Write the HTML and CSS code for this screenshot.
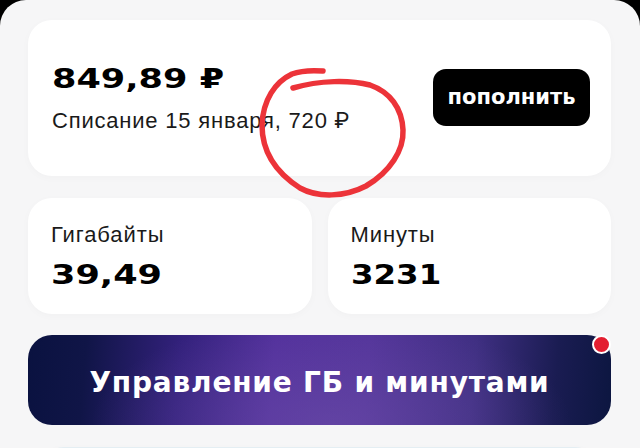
FILE: index.html
```html
<!DOCTYPE html>
<html lang="ru">
<head>
<meta charset="utf-8">
<title>Баланс</title>
<link rel="stylesheet" href="styles.css">
</head>
<body>
<div class="screen">
  <section class="card balance">
    <div class="balance-info">
      <div class="amount"><span class="wide">849,89 ₽</span></div>
      <div class="charge">Списание 15 января, 720 ₽</div>
    </div>
    <button class="topup">пополнить</button>
  </section>

  <div class="stats">
    <section class="card stat">
      <div class="stat-label">Гигабайты</div>
      <div class="stat-value"><span class="wide">39,49</span></div>
    </section>
    <section class="card stat">
      <div class="stat-label">Минуты</div>
      <div class="stat-value"><span class="wide narrow">3231</span></div>
    </section>
  </div>

  <a class="manage">
    <span class="manage-text">Управление ГБ и минутами</span>
    <span class="dot"></span>
  </a>

  <section class="card next"></section>

  <svg class="scribble" width="640" height="448" viewBox="0 0 640 448" aria-hidden="true">
    <path d="M323,71 C310,70 300,71 292,74 C275,82 263,100 262,125 C262,150 275,172 300,188 C318,198 345,197 366,186 C390,172 404,150 403,130 C402,108 390,92 370,85 C350,80 320,80 293,88" fill="none" stroke="#ec3339" stroke-width="5.5" stroke-linecap="round" stroke-linejoin="round"/>
  </svg>
</div>
</body>
</html>
```

FILE: styles.css
```css
html, body {
  margin: 0;
  padding: 0;
  background: #000;
}

body {
  width: 640px;
  height: 448px;
  overflow: hidden;
  font-family: "Liberation Sans", "Roboto", sans-serif;
  color: #111;
}

.screen {
  position: relative;
  box-sizing: border-box;
  width: 640px;
  height: 448px;
  background: #f6f6f7;
  border-radius: 26px 26px 0 0;
  padding: 20px 29px 0 28px;
  display: flex;
  flex-direction: column;
  overflow: hidden;
}

.screen > * {
  flex-shrink: 0;
}

.card {
  background: #fff;
  border-radius: 24px;
  box-shadow: 0 2px 8px rgba(0, 0, 0, 0.025);
}

.balance {
  height: 156px;
  box-sizing: border-box;
  display: flex;
  align-items: center;
  justify-content: space-between;
  padding: 0 21px 0 24px;
}

.balance-info {
  display: flex;
  flex-direction: column;
  gap: 16px;
  margin-top: 2px;
}

.amount,
.stat-value {
  font-family: "DejaVu Sans", sans-serif;
  font-weight: bold;
  font-size: 27px;
  line-height: 28px;
  color: #000;
}

.wide {
  display: inline-block;
  transform: scaleX(1.3);
  transform-origin: left center;
}

.wide.narrow {
  transform: scaleX(1.2);
}

.charge {
  font-size: 22px;
  line-height: 24px;
  color: #1a1a1a;
  letter-spacing: 0.8px;
}

.topup {
  background: #000;
  color: #fff;
  border: none;
  border-radius: 13px;
  width: 157px;
  height: 57px;
  font-family: "DejaVu Sans", sans-serif;
  font-weight: bold;
  font-size: 21px;
  padding: 0;
  margin-top: -2px;
}

.stats {
  display: grid;
  grid-template-columns: 1fr 1fr;
  gap: 16px;
  margin-top: 22px;
}

.stat {
  height: 116px;
  box-sizing: border-box;
  padding: 25px 22px 0 23px;
  display: flex;
  flex-direction: column;
  gap: 14px;
}

.stat-label {
  font-size: 22px;
  line-height: 24px;
  color: #1a1a1a;
  letter-spacing: 0.9px;
}

.manage {
  position: relative;
  display: flex;
  align-items: center;
  justify-content: center;
  height: 90px;
  margin-top: 21px;
  border-radius: 24px;
  background:
    radial-gradient(ellipse 240px 110px at 52% 100%, rgba(110, 80, 170, 0.55), rgba(110, 80, 170, 0) 100%),
    linear-gradient(95deg, #0a1240 0%, #101547 10%, #33217c 26%, #52309c 42%, #53349a 58%, #3f2f82 76%, #1a1c52 90%, #0c1640 100%);
}

.manage-text {
  font-family: "DejaVu Sans", sans-serif;
  font-weight: bold;
  font-size: 28px;
  color: #fff;
  letter-spacing: 0.8px;
  margin-top: 4px;
}

.dot {
  position: absolute;
  top: 0;
  right: 0;
  width: 15px;
  height: 15px;
  border-radius: 50%;
  background: #e31e30;
  border: 2.5px solid #fff;
}

.next {
  height: 60px;
  margin-top: 22px;
  border: 1px solid #e4eef3;
  margin-left: 12px;
  margin-right: 12px;
}

.scribble {
  position: absolute;
  left: 0;
  top: 0;
  pointer-events: none;
}
```
